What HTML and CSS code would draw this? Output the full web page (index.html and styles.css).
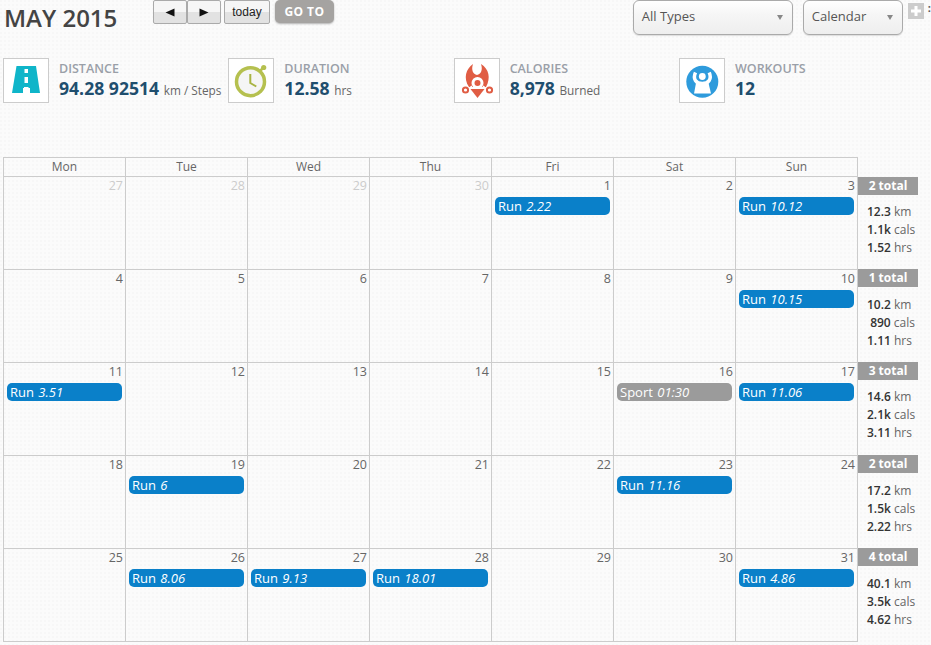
FILE: index.html
```html
<!DOCTYPE html>
<html lang="en">
<head>
<meta charset="utf-8">
<title>May 2015</title>
<link rel="stylesheet" href="styles.css">
</head>
<body>
<header class="topbar">
  <h1 class="title">MAY 2015</h1>
  <div class="nav">
    <div class="btn-group">
      <button class="btn btn-arrow"><svg width="10" height="9" viewBox="0 0 10 9"><path d="M.5 4.500 9.500.5V8.500Z"/></svg></button>
      <button class="btn btn-arrow"><svg width="10" height="9" viewBox="0 0 10 9"><path d="M9.500 4.500 .5.5V8.500Z"/></svg></button>
    </div>
    <button class="btn btn-today">today</button>
    <button class="goto">GO TO</button>
  </div>
  <div class="filters">
    <div class="select select-types"><span>All Types</span><i class="caret"></i></div>
    <div class="select select-view"><span>Calendar</span><i class="caret"></i></div>
    <div class="plus"><svg width="16" height="16" viewBox="0 0 16 16"><path d="M6.500 3h3v3.500H13v3H9.500V13h-3V9.500H3v-3h3.500Z"/></svg></div>
    <span class="more">:</span>
  </div>
</header>

<section class="stats">
  <div class="stat">
    <div class="stat-icon"><svg width="44" height="43" viewBox="1 1 44 43"><path fill="#0fb5c9" d="M13.500 8H33L37 35H27V30H20V35H9Z"/><path fill="#fff" d="M21.500 11h3.500v4h-3.500zM21.500 19h3.500v6h-3.500zM21 29h4.500v6H21z"/></svg></div>
    <div><div class="stat-label">DISTANCE</div><div class="stat-value">94.28 92514 <small>km / Steps</small></div></div>
  </div>
  <div class="stat">
    <div class="stat-icon"><svg width="44" height="43" viewBox="1 1 44 43"><circle cx="22.500" cy="23.700" r="14" fill="#f5f5f5" stroke="#b5c04f" stroke-width="3.500"/><circle cx="35.700" cy="9.500" r="2.600" fill="#b5c04f"/><path d="M32 13l3-3" stroke="#b5c04f" stroke-width="2.500"/><path d="M22.300 16V25l6 3.500" fill="none" stroke="#a9b443" stroke-width="2"/></svg></div>
    <div><div class="stat-label">DURATION</div><div class="stat-value">12.58 <small>hrs</small></div></div>
  </div>
  <div class="stat">
    <div class="stat-icon"><svg width="44" height="43" viewBox="1 1 44 43"><path fill="#e05d44" d="M19 6C12 11 9 20 15 29H32C37 20 35 11 27 6C29 12 27 16 23 17C19 16 17 12 19 6Z"/><circle cx="23.500" cy="25" r="6" fill="#fff"/><circle cx="23.500" cy="25" r="3" fill="#e05d44"/><path fill="#e05d44" d="M16.500 31H30.500L23.500 40Z"/><path d="M13 32 18 28M34 32 29 28" stroke="#fff" stroke-width="1.500"/><circle cx="11.500" cy="32" r="2.600" fill="#fff" stroke="#e05d44" stroke-width="2"/><circle cx="35.500" cy="32" r="2.600" fill="#fff" stroke="#e05d44" stroke-width="2"/></svg></div>
    <div><div class="stat-label">CALORIES</div><div class="stat-value">8,978 <small>Burned</small></div></div>
  </div>
  <div class="stat">
    <div class="stat-icon"><svg width="44" height="43" viewBox="1 1 44 43"><circle cx="23.300" cy="23.700" r="16" fill="#2e9bdc"/><circle cx="23.300" cy="18.500" r="3.400" fill="#fff"/><path d="M16.500 14.500C13.500 21 17 25.500 23.300 25.500C29.600 25.500 33.100 21 30.200 14.500" fill="none" stroke="#fff" stroke-width="3.500"/><path fill="#fff" d="M17 25H29.500L32 35.500H15Z"/></svg></div>
    <div><div class="stat-label">WORKOUTS</div><div class="stat-value">12</div></div>
  </div>
</section>

<main class="calendar">
  <div class="dow">Mon</div><div class="dow">Tue</div><div class="dow">Wed</div><div class="dow">Thu</div><div class="dow">Fri</div><div class="dow">Sat</div><div class="dow">Sun</div><div class="side-head"></div>

  <div class="day other"><div class="num">27</div></div>
  <div class="day other"><div class="num">28</div></div>
  <div class="day other"><div class="num">29</div></div>
  <div class="day other"><div class="num">30</div></div>
  <div class="day"><div class="num">1</div><div class="event">Run <em>2.22</em></div></div>
  <div class="day"><div class="num">2</div></div>
  <div class="day"><div class="num">3</div><div class="event">Run <em>10.12</em></div></div>
  <div class="side side-first"><div class="total">2 total</div><ul class="totals"><li><b>12.3</b> km</li><li><b>1.1k</b> cals</li><li><b>1.52</b> hrs</li></ul></div>

  <div class="day"><div class="num">4</div></div>
  <div class="day"><div class="num">5</div></div>
  <div class="day"><div class="num">6</div></div>
  <div class="day"><div class="num">7</div></div>
  <div class="day"><div class="num">8</div></div>
  <div class="day"><div class="num">9</div></div>
  <div class="day"><div class="num">10</div><div class="event">Run <em>10.15</em></div></div>
  <div class="side side-low"><div class="total">1 total</div><ul class="totals"><li><b>10.2</b> km</li><li>&nbsp;<b>890</b> cals</li><li><b>1.11</b> hrs</li></ul></div>

  <div class="day"><div class="num">11</div><div class="event">Run <em>3.51</em></div></div>
  <div class="day"><div class="num">12</div></div>
  <div class="day"><div class="num">13</div></div>
  <div class="day"><div class="num">14</div></div>
  <div class="day"><div class="num">15</div></div>
  <div class="day"><div class="num">16</div><div class="event event-sport">Sport <em>01:30</em></div></div>
  <div class="day"><div class="num">17</div><div class="event">Run <em>11.06</em></div></div>
  <div class="side"><div class="total">3 total</div><ul class="totals"><li><b>14.6</b> km</li><li><b>2.1k</b> cals</li><li><b>3.11</b> hrs</li></ul></div>

  <div class="day"><div class="num">18</div></div>
  <div class="day"><div class="num">19</div><div class="event">Run <em>6</em></div></div>
  <div class="day"><div class="num">20</div></div>
  <div class="day"><div class="num">21</div></div>
  <div class="day"><div class="num">22</div></div>
  <div class="day"><div class="num">23</div><div class="event">Run <em>11.16</em></div></div>
  <div class="day"><div class="num">24</div></div>
  <div class="side side-low"><div class="total">2 total</div><ul class="totals"><li><b>17.2</b> km</li><li><b>1.5k</b> cals</li><li><b>2.22</b> hrs</li></ul></div>

  <div class="day"><div class="num">25</div></div>
  <div class="day"><div class="num">26</div><div class="event">Run <em>8.06</em></div></div>
  <div class="day"><div class="num">27</div><div class="event">Run <em>9.13</em></div></div>
  <div class="day"><div class="num">28</div><div class="event">Run <em>18.01</em></div></div>
  <div class="day"><div class="num">29</div></div>
  <div class="day"><div class="num">30</div></div>
  <div class="day"><div class="num">31</div><div class="event">Run <em>4.86</em></div></div>
  <div class="side side-low"><div class="total">4 total</div><ul class="totals"><li><b>40.1</b> km</li><li><b>3.5k</b> cals</li><li><b>4.62</b> hrs</li></ul></div>
</main>
</body>
</html>
```
FILE: styles.css
```css
html, body { margin: 0; padding: 0; height: 100%; overflow: hidden; }
body {
  font-family: "Open Sans", sans-serif;
  color: #555;
  background-color: #fbfbfb;
  background-image: radial-gradient(circle at 1px 1px, #f7f7f7 1px, transparent 1.2px);
  background-size: 4px 4px;
}

.topbar { display: flex; align-items: flex-start; height: 58px; padding-left: 4px; box-sizing: border-box; }
.title { margin: 0; width: 149px; font-size: 24px; font-weight: 600; line-height: 35px; color: #444; white-space: nowrap; }
.nav { display: flex; width: 480px; }
.btn-group { display: flex; margin-right: 3px; }
.btn {
  height: 24px; padding: 0; box-sizing: border-box; border: 1px solid #aaa; border-radius: 2px;
  background: linear-gradient(#f6f6f6 50%, #e2e2e2 50%);
  color: #222; font-family: "Liberation Sans", Arial, sans-serif; font-size: 12px;
  display: flex; align-items: center; justify-content: center;
}
.btn-arrow { width: 34px; }
.btn-arrow svg { display: block; fill: #111; }
.btn-today { width: 46px; margin-right: 5px; }
.goto {
  width: 59px; height: 23px; padding: 0; border: 0; border-radius: 5px;
  background: #a5a3a1; color: #fff; font-family: "Open Sans", sans-serif; font-size: 12px; font-weight: 700; letter-spacing: .4px;
  box-shadow: 0 1px 2px rgba(0,0,0,.3);
}
.filters { display: flex; align-items: flex-start; }
.select {
  height: 35px; box-sizing: border-box; border: 1px solid #aaa; border-radius: 6px;
  background: linear-gradient(#fff, #f6f6f6 40%, #eee);
  box-shadow: 0 1px 1px rgba(0,0,0,.12);
  display: flex; align-items: center; justify-content: space-between;
  padding: 0 9px 3px 8px; font-size: 13px; color: #555;
}
.select-types { width: 160px; margin-right: 10px; }
.select-view { width: 100px; margin-right: 5px; }
.caret { width: 0; height: 0; border: 3.500px solid transparent; border-top: 5px solid #888; border-bottom: 0; margin-top: 3px; }
.plus { width: 16px; height: 16px; margin-top: 3px; background: #ccc; flex: none; }
.plus svg { display: block; fill: #fff; }
.more { margin: 1px 0 0 4px; font-size: 11px; font-weight: 700; line-height: 14px; color: #555; }

.stats { display: flex; padding-left: 3px; height: 99px; box-sizing: border-box; }
.stat { display: flex; width: 225.330px; }
.stat-icon {
  width: 46px; height: 45px; box-sizing: border-box; border: 1px solid #ccc; background: #fff; margin-right: 10px;
  display: flex; flex: none;
}
.stat-icon svg { display: block; }
.stat-label { font-size: 12.500px; font-weight: 600; line-height: 16px; margin-top: 3px; color: #9a9fa8; }
.stat-value { font-size: 17.600px; font-weight: 700; line-height: 24px; margin-top: -1px; color: #1f4e6e; white-space: nowrap; }
.stat-value small { font-size: 11.800px; font-weight: 400; color: #666; }

.calendar {
  display: grid; grid-template-columns: 123px repeat(6, 122px) 60px; grid-template-rows: 20px repeat(5, 93px);
  margin-left: 3px; width: max-content;
}
.dow, .day { border-right: 1px solid #ccc; border-bottom: 1px solid #ccc; box-sizing: border-box; }
.dow { border-top: 1px solid #ccc; text-align: center; font-size: 12px; line-height: 17px; color: #666; }
.day:nth-child(8n+1), .dow:first-child { border-left: 1px solid #ccc; }
.day { padding: 0 0 0 3px; }
.num { text-align: right; font-size: 12.500px; line-height: 18px; color: #666; padding-right: 2px; }
.other .num { color: #ccc; }
.event {
  width: 115px; height: 18px; margin-top: 2px; box-sizing: border-box; padding-left: 3px;
  border-radius: 5px; background: #0a80c9; color: #fff; font-size: 13px; line-height: 18px; white-space: nowrap;
}
.event em { font-style: italic; margin-left: 1px; }
.event-sport { background: #9b9b9b; }
.side { margin-top: -1px; }
.side-first { margin-top: 0; }
.total { background: #9b9b9b; color: #fff; font-size: 12px; font-weight: 700; line-height: 18px; text-align: center; width: 60px; }
.totals { list-style: none; margin: 8px 0 0; padding: 0 0 0 9px; font-size: 12px; line-height: 18px; color: #666; white-space: nowrap; }
.side-low .totals { margin-top: 9px; }
.totals b { font-weight: 600; color: #333; }
```
